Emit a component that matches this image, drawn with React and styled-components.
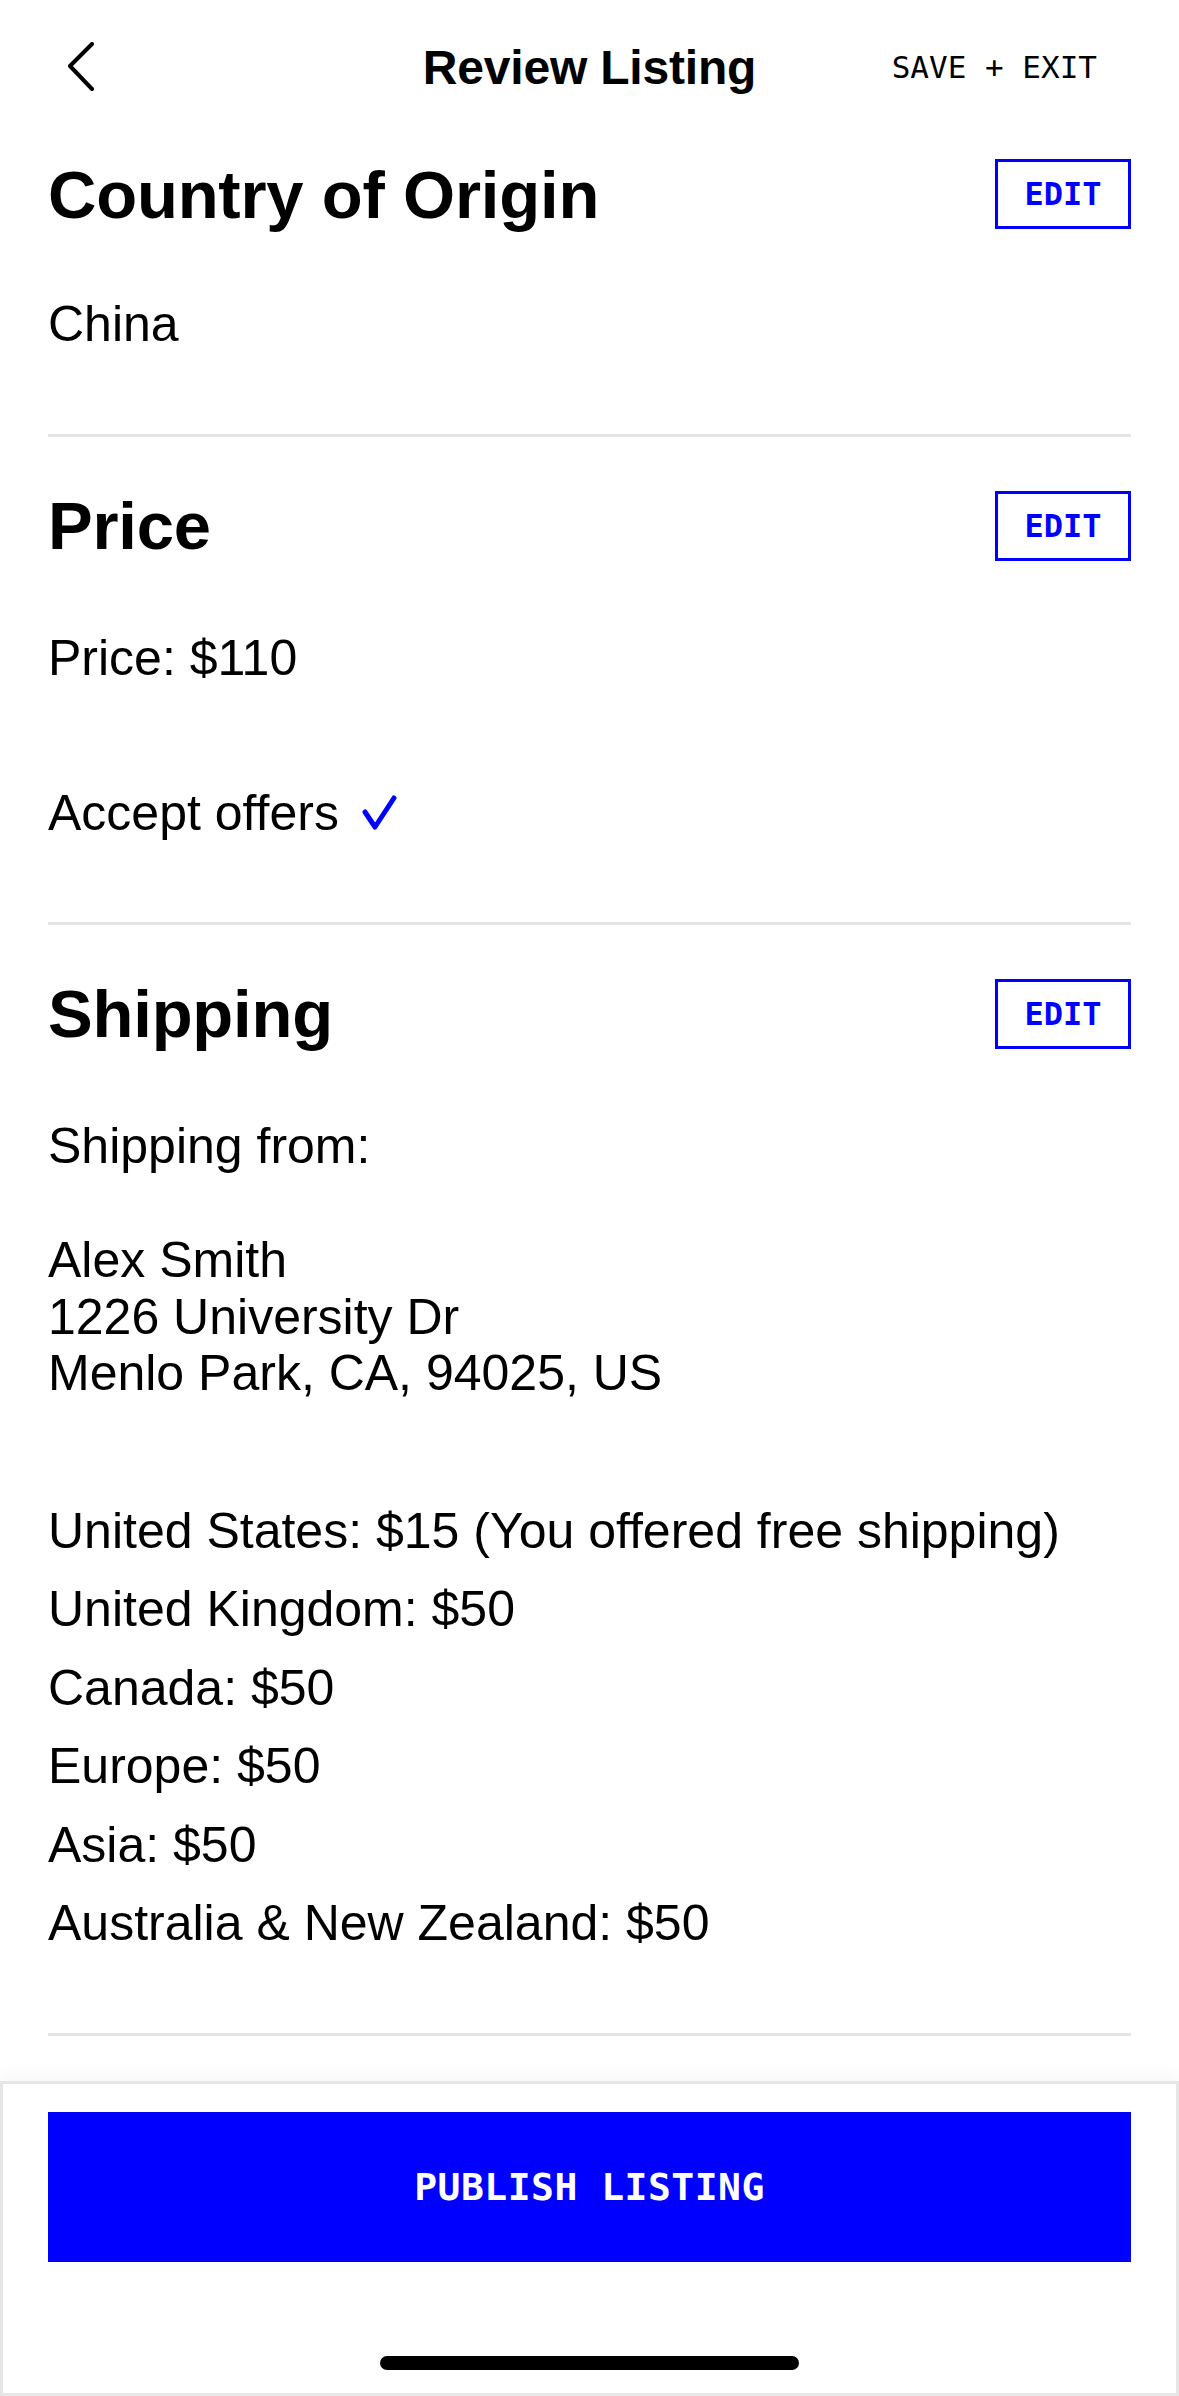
import styled, { createGlobalStyle } from "styled-components"

const GlobalStyle = createGlobalStyle`
    html, body {
        margin: 0;
        padding: 0;
        background: #fff;
    }
    * {
        box-sizing: border-box;
    }
`

const BLUE = "#0000ff"
const LINE = "#e4e4e4"
const MONO = `"DejaVu Sans Mono", "Liberation Mono", monospace`
const SANS = `"Liberation Sans", Arial, Helvetica, sans-serif`

const Page = styled.div`
    display: flex;
    flex-direction: column;
    min-height: 100vh;
    font-family: ${SANS};
    color: #000;
`

const Header = styled.header`
    display: grid;
    grid-template-columns: 1fr auto 1fr;
    align-items: center;
    height: 104px;
    padding: 30px 48px 0;
`

const BackButton = styled.button`
    justify-self: start;
    display: flex;
    align-items: center;
    margin-left: 18px;
    padding: 0;
    border: none;
    background: none;
    cursor: pointer;
`

const Title = styled.h1`
    margin: 0;
    font-size: 48px;
    font-weight: 700;
    letter-spacing: -0.2px;
`

const SaveExit = styled.button`
    justify-self: end;
    margin-right: 34px;
    padding: 0;
    border: none;
    background: none;
    font-family: ${MONO};
    font-size: 31px;
    color: #000;
    cursor: pointer;
`

const Main = styled.main`
    flex: 1;
    padding: 0 48px;
`

const Section = styled.section`
    padding-top: ${p => p.$top}px;
    padding-bottom: ${p => p.$bottom}px;
    border-bottom: 3px solid ${LINE};
`

const SectionHead = styled.div`
    display: flex;
    align-items: center;
    justify-content: space-between;
    height: 70px;
`

const Heading = styled.h2`
    margin: 0;
    font-size: 67px;
    font-weight: 700;
    letter-spacing: -0.2px;
`

const EditButton = styled.button`
    width: 136px;
    height: 70px;
    padding: 0;
    border: 3px solid ${BLUE};
    background: #fff;
    color: ${BLUE};
    font-family: ${MONO};
    font-size: 32px;
    font-weight: 700;
    cursor: pointer;
`

const Text = styled.div`
    margin-top: ${p => p.$space || 0}px;
    font-size: 50px;
    line-height: ${p => p.$lh || 56.5}px;
    display: ${p => (p.$flex ? "flex" : "block")};
    align-items: center;
    gap: 22px;
`

const Footer = styled.footer`
    display: flex;
    flex-direction: column;
    align-items: center;
    height: 315px;
    padding: 28px 45px 0;
    border: 3px solid #e6e6e6;
    background: #fff;
    box-shadow: 0 -8px 14px rgba(0, 0, 0, 0.03);
`

const PublishButton = styled.button`
    width: 100%;
    height: 150px;
    border: none;
    background: ${BLUE};
    color: #fff;
    font-family: ${MONO};
    font-size: 38px;
    font-weight: 700;
    letter-spacing: 0.5px;
    cursor: pointer;
`

const HomeIndicator = styled.div`
    width: 419px;
    height: 14px;
    margin-top: 94px;
    border-radius: 7px;
    background: #000;
`

function Chevron() {
    return (
        <svg width="30" height="50" viewBox="0 0 30 50" fill="none">
            <polyline points="26,2 4,24 26,47" stroke="#000" strokeWidth="4" strokeLinecap="round" strokeLinejoin="round" />
        </svg>
    )
}

function Check() {
    return (
        <svg width="36" height="40" viewBox="0 0 36 40" fill="none">
            <polyline points="4,19 14,34 33,5" stroke={BLUE} strokeWidth="5" strokeLinecap="round" strokeLinejoin="round" />
        </svg>
    )
}

const rates = [
    "United States: $15 (You offered free shipping)",
    "United Kingdom: $50",
    "Canada: $50",
    "Europe: $50",
    "Asia: $50",
    "Australia & New Zealand: $50",
]

function ReviewSection({ title, top = 54, bottom = 80, children }) {
    return (
        <Section $top={top} $bottom={bottom}>
            <SectionHead>
                <Heading>{title}</Heading>
                <EditButton>EDIT</EditButton>
            </SectionHead>
            {children}
        </Section>
    )
}

export default function App() {
    return (
        <>
            <GlobalStyle />
            <Page>
                <Header>
                    <BackButton aria-label="Back"><Chevron /></BackButton>
                    <Title>Review Listing</Title>
                    <SaveExit>SAVE + EXIT</SaveExit>
                </Header>

                <Main>
                    <ReviewSection title="Country of Origin" top={55} bottom={81}>
                        <Text $space={67}>China</Text>
                    </ReviewSection>

                    <ReviewSection title="Price">
                        <Text $space={69}>Price: $110</Text>
                        <Text $space={99} $flex>Accept offers <Check /></Text>
                    </ReviewSection>

                    <ReviewSection title="Shipping" bottom={70}>
                        <Text $space={69}>Shipping from:</Text>
                        <Text $space={58}>
                            Alex Smith<br />
                            1226 University Dr<br />
                            Menlo Park, CA, 94025, US
                        </Text>
                        <Text $space={90} $lh={78.6}>
                            {rates.map(r => <div key={r}>{r}</div>)}
                        </Text>
                    </ReviewSection>
                </Main>

                <Footer>
                    <PublishButton>PUBLISH LISTING</PublishButton>
                    <HomeIndicator />
                </Footer>
            </Page>
        </>
    )
}
